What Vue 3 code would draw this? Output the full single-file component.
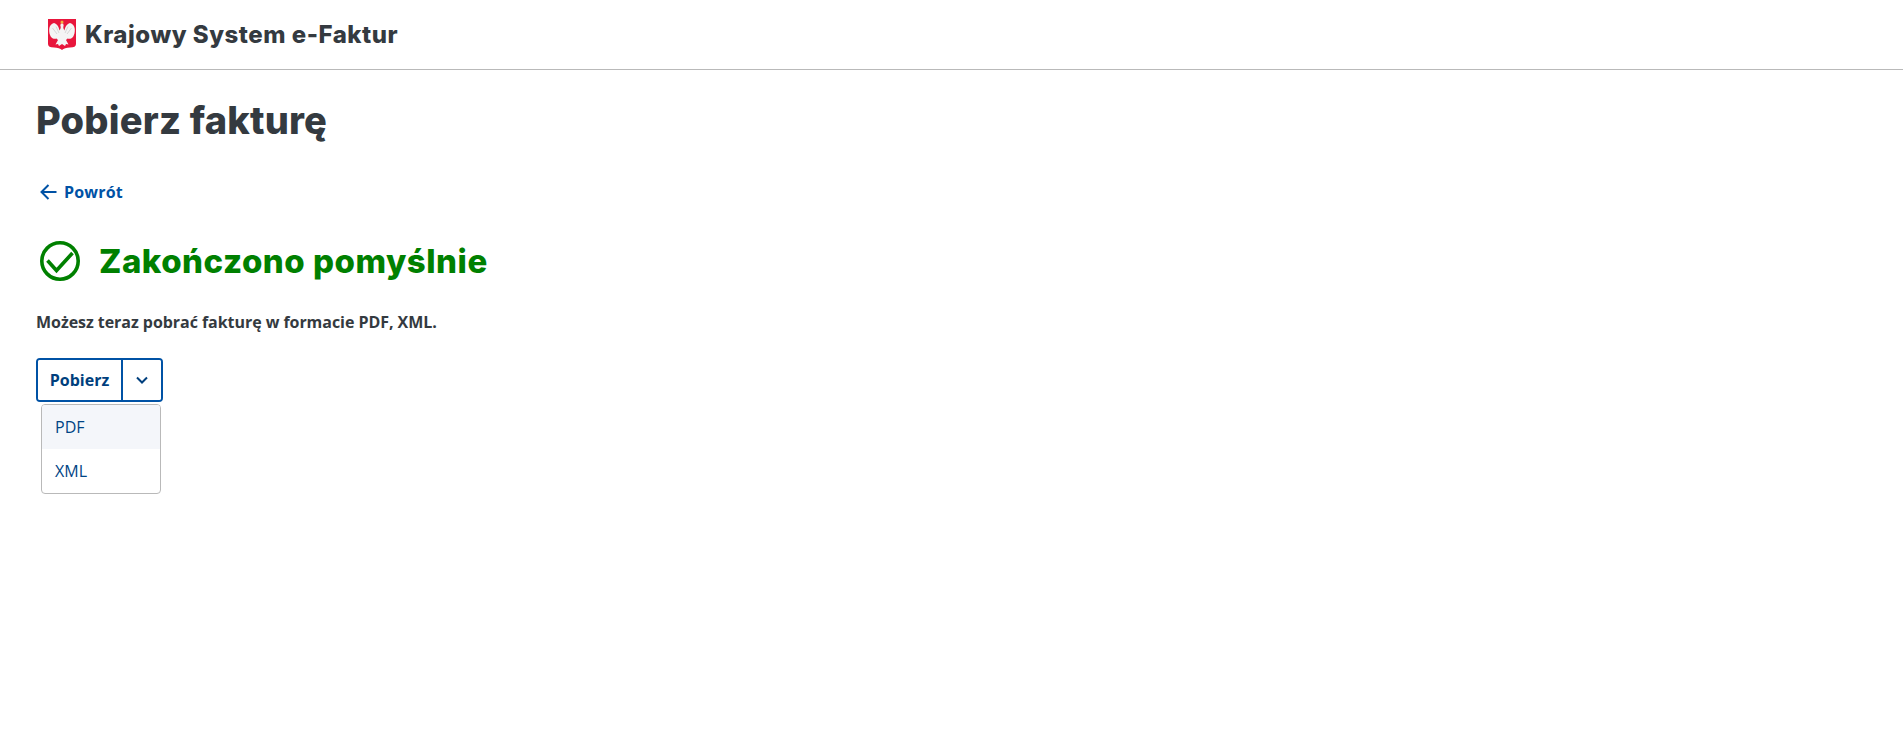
<script setup>
const formats = ['PDF', 'XML']
</script>

<template>
  <div class="page">
    <header class="topbar">
      <svg class="emblem" viewBox="0 0 28 31" width="28" height="31" aria-hidden="true">
        <path d="M0 0H28V25C28 27.500 26 28.500 22 28.500C18.500 28.500 15.500 29.500 14 31C12.500 29.500 9.500 28.500 6 28.500C2 28.500 0 27.500 0 25Z" fill="#e8163c"/>
        <path d="M12.800 1.800H15.200L15.500 4.500H12.500Z" fill="#f2b33d"/>
        <path d="M14 4.500C12.500 4.500 12 6 12.600 7.500C13 8.500 12.300 10.500 11.500 11.500C11 8.500 9.500 5 6 4C3.500 4.500 1.500 7 1.200 10C1 13 1.700 16 3 18C4.700 20 7 20 8.500 19.500L10 21L7.500 25.500L10 25L11 27L14 25L17 27L18 25L20.500 25.500L18 21L19.500 19.500C21 20 23.300 20 25 18C26.300 16 27 13 26.800 10C26.500 7 24.500 4.500 22 4C18.500 5 17 8.500 16.500 11.500C15.700 10.500 15 8.500 15.400 7.500C16 6 15.500 4.500 14 4.500Z" fill="#f4f4f4"/>
        <path d="M4.500 9L9 15M8 7.500L11 14M23.500 9L19 15M20 7.500L17 14" stroke="#cfcfcf" stroke-width=".8" fill="none"/>
      </svg>
      <span class="brand">Krajowy System e-Faktur</span>
    </header>

    <main class="content">
      <h1 class="title">Pobierz fakturę</h1>

      <a class="back" href="#">
        <svg viewBox="0 0 17 16" width="17" height="16" fill="none" stroke="#0052a5" stroke-width="2" aria-hidden="true">
          <path d="M16.500 8H2M8.500 1L1.500 8L8.500 15"/>
        </svg>
        <span>Powrót</span>
      </a>

      <div class="status">
        <svg viewBox="0 0 40 40" width="40" height="40" fill="none" stroke="#008000" stroke-width="3.600" aria-hidden="true">
          <circle cx="20" cy="20" r="18.200"/>
          <path d="M7.500 19.500L16.500 29.500L32.500 12"/>
        </svg>
        <h2 class="status-text">Zakończono pomyślnie</h2>
      </div>

      <p class="lead">Możesz teraz pobrać fakturę w formacie PDF, XML.</p>

      <div class="split">
        <button class="split-main" type="button">Pobierz</button>
        <button class="split-toggle" type="button" aria-label="Rozwiń">
          <svg viewBox="0 0 14 14" width="14" height="14" fill="none" stroke="#003f7d" stroke-width="2" aria-hidden="true">
            <path d="M2 4.500L7 9.500L12 4.500"/>
          </svg>
        </button>
      </div>

      <ul class="menu">
        <li v-for="(item, i) in formats" :key="item" class="menu-item" :class="{ active: i === 0 }">{{ item }}</li>
      </ul>
    </main>
  </div>
</template>

<style>
html, body { background: #fff; }
</style>

<style scoped>
.page {
  min-height: 729px;
  background: #fff;
  font-family: "Open Sans", "Liberation Sans", sans-serif;
  color: #343a40;
}
.topbar {
  height: 69px;
  display: flex;
  align-items: center;
  gap: 9px;
  padding-left: 48px;
  border-bottom: 1px solid #b9b9b9;
}
.emblem {
  display: block;
  margin-bottom: 1px;
}
.brand {
  font-family: Inter, "Liberation Sans", sans-serif;
  font-weight: 800;
  font-size: 24px;
  letter-spacing: .52px;
  color: #343a40;
}
.content {
  padding: 26px 36px 0;
}
.title {
  margin: 0;
  font-family: Inter, "Liberation Sans", sans-serif;
  font-weight: 800;
  font-size: 38px;
  letter-spacing: .2px;
  line-height: 48px;
  color: #343a40;
}
.back {
  display: flex;
  align-items: center;
  gap: 7px;
  width: max-content;
  margin: 36px 0 0 4px;
  height: 24px;
  color: #0052a5;
  font-weight: 700;
  font-size: 16px;
  letter-spacing: .2px;
  text-decoration: none;
}
.status {
  display: flex;
  align-items: center;
  gap: 19px;
  margin-top: 35px;
  padding-left: 4px;
}
.status-text {
  margin: 0;
  font-family: Inter, "Liberation Sans", sans-serif;
  font-weight: 800;
  font-size: 33px;
  letter-spacing: .5px;
  line-height: 44px;
  color: #008000;
}
.lead {
  margin: 27px 0 0;
  font-weight: 700;
  font-size: 16px;
  letter-spacing: -.05px;
  line-height: 24px;
}
.split {
  display: flex;
  width: 127px;
  height: 44px;
  margin-top: 24px;
  box-sizing: border-box;
  border: 2px solid #0052a5;
  border-radius: 4px;
}
.split button {
  background: #fff;
  border: 0;
  padding: 0;
  font-family: inherit;
  color: #003f7d;
}
.split-main {
  flex: 1;
  font-weight: 700;
  font-size: 16px;
  border-radius: 2px 0 0 2px;
}
.split-toggle {
  width: 40px;
  border-left: 2px solid #0052a5 !important;
  display: flex;
  align-items: center;
  justify-content: center;
  border-radius: 0 2px 2px 0;
}
.menu {
  list-style: none;
  margin: 2px 0 0 5px;
  padding: 0;
  width: 120px;
  box-sizing: border-box;
  border: 1px solid #b9b9b9;
  border-radius: 4px;
  background: #fff;
  overflow: hidden;
}
.menu-item {
  height: 44px;
  line-height: 44px;
  padding-left: 13px;
  font-size: 16px;
  color: #004485;
}
.menu-item.active {
  background: #f4f6fa;
}
</style>
